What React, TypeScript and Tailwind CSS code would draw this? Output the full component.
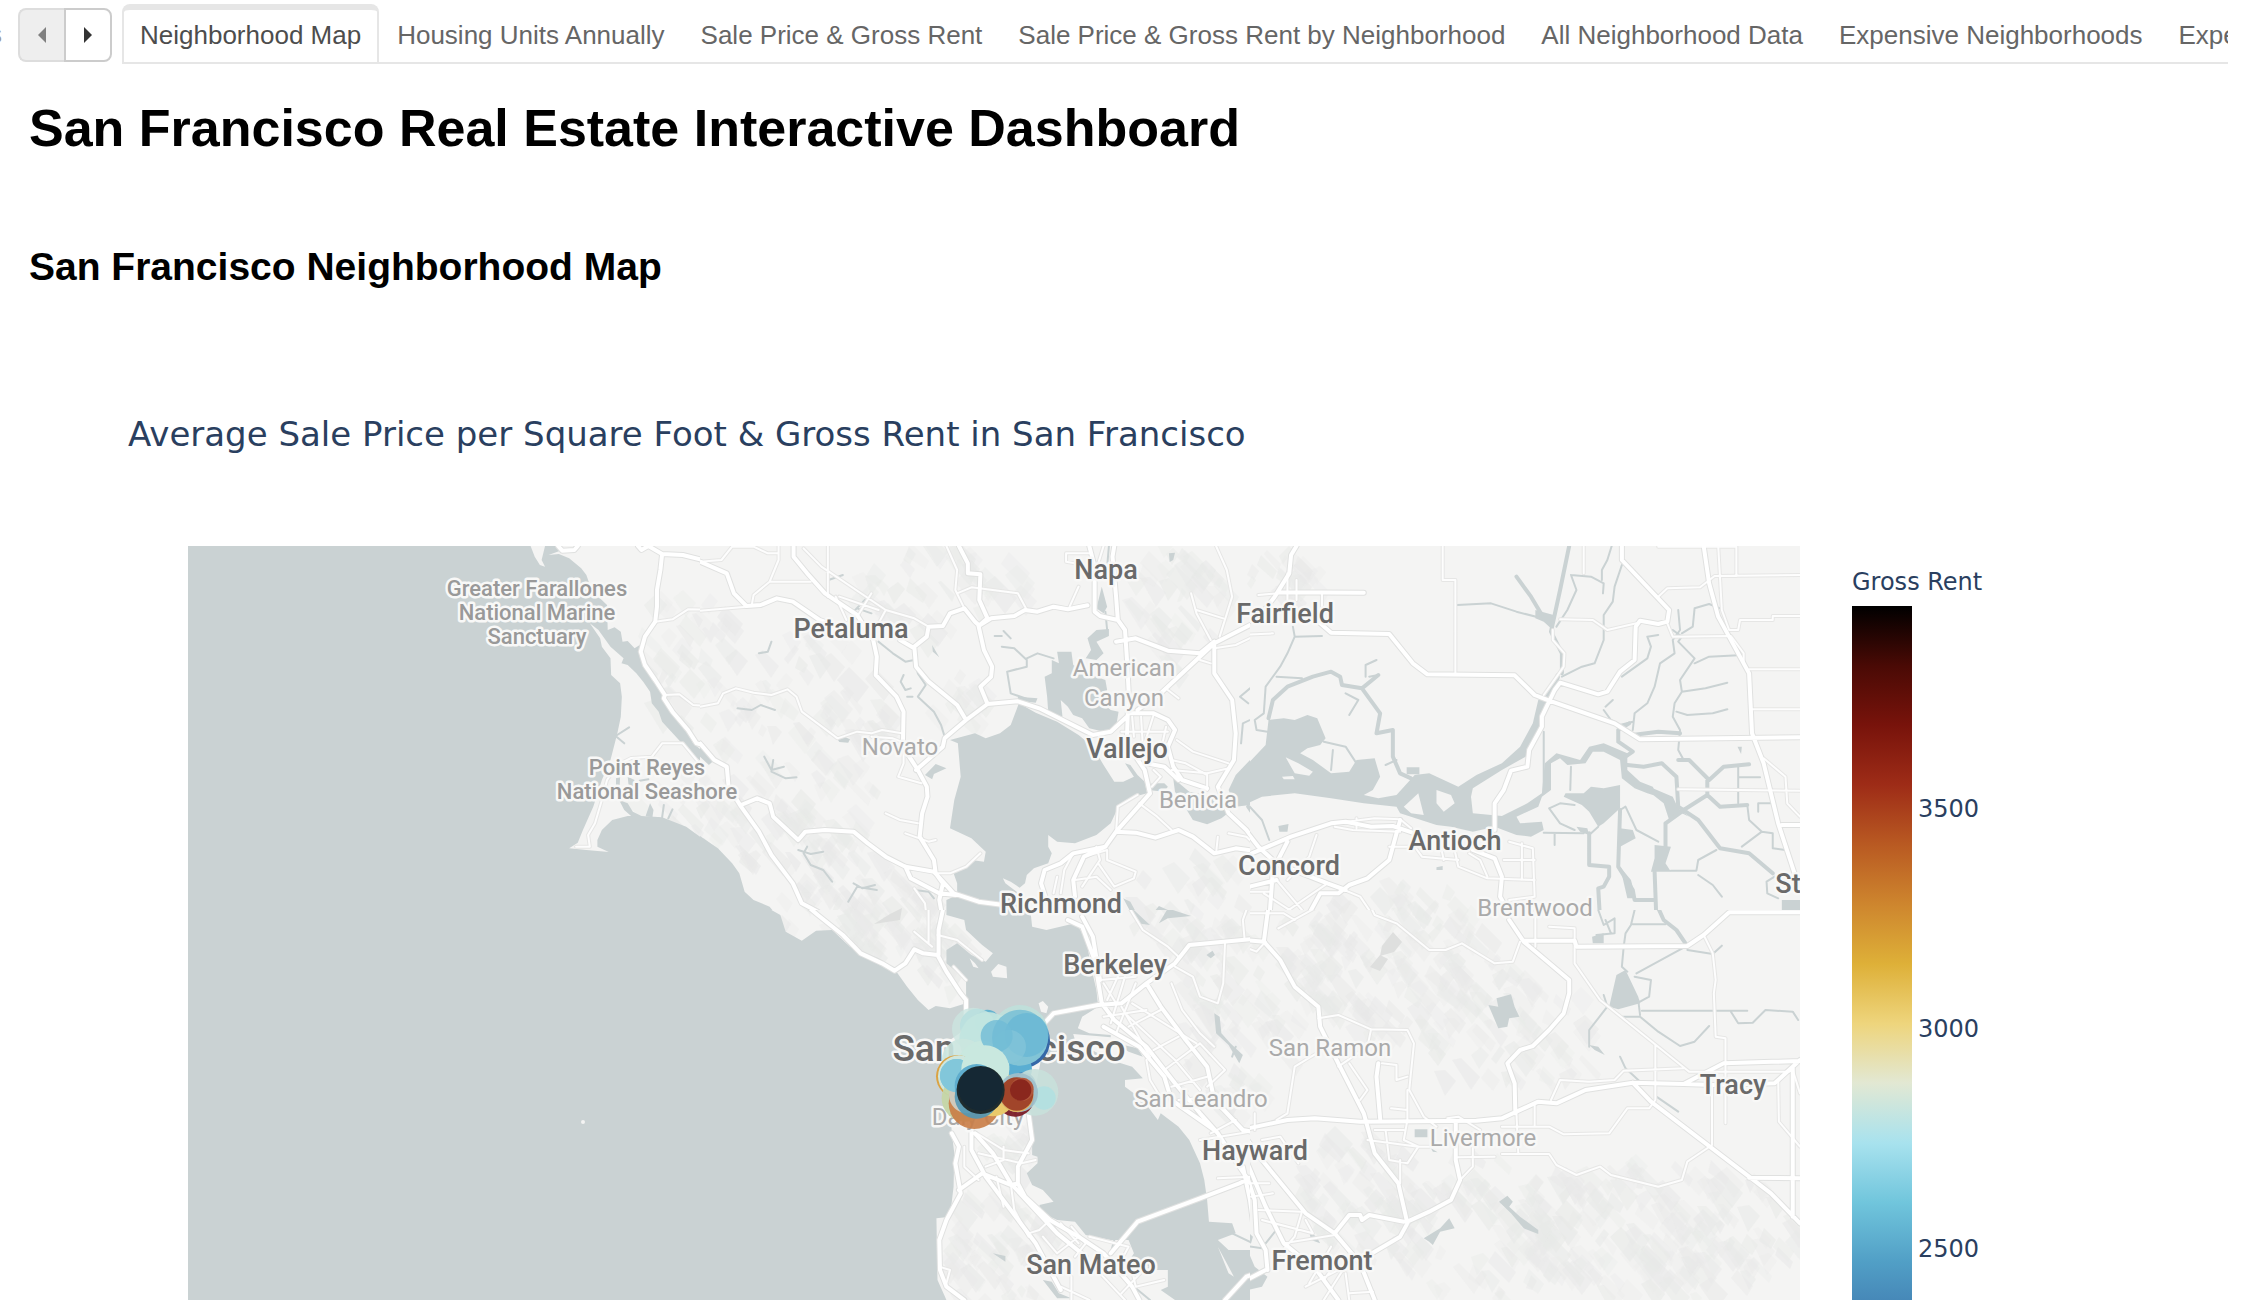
import React from "react";

const TABS = [
  "Neighborhood Map",
  "Housing Units Annually",
  "Sale Price & Gross Rent",
  "Sale Price & Gross Rent by Neighborhood",
  "All Neighborhood Data",
  "Expensive Neighborhoods",
  "Expensive Neighborhood Costs",
];

const WATER = "#cad2d3";
const LAND = "#f4f4f3";

type Tile = {
  x: number;
  y: number;
  w: number;
  h: number;
  view: string;
  water: string;
  islands?: string;
  streams: string;
  channels?: string;
  major: string;
  minor: string;
};

// Each tile has its own local coordinates and is scaled into the map.
const TILES: Tile[] = [
  {
    x: 188,
    y: 546,
    w: 512,
    h: 364,
    view: "23 48 1487 1092",
    water:
      "M23,48 H1018 L1030,80 L1045,105 L1060,110 L1050,90 L1060,48 H1098 L1104,62 L1070,75 L1100,72 L1130,85 L1165,115 L1180,135 L1190,165 L1215,200 L1240,225 L1242,300 L1262,292 L1280,305 L1285,335 L1300,333 L1320,355 L1335,345 L1345,400 L1370,450 L1400,490 L1415,525 L1450,560 L1470,600 L1490,640 L1548,690 L1520,700 L1480,665 L1440,620 L1400,575 L1390,545 L1370,520 L1365,485 L1345,455 L1325,430 L1300,405 L1282,400 L1288,385 L1250,350 L1215,300 L1190,280 L1220,325 L1225,350 L1250,385 L1252,435 L1278,460 L1283,500 L1280,560 L1270,610 L1250,690 L1225,750 L1200,830 L1170,900 L1155,938 L1130,955 L1180,960 L1245,966 L1212,950 L1212,930 L1225,900 L1255,870 L1300,858 L1340,858 L1400,862 L1470,890 L1510,920 L1568,975 V1170 H23Z M1275,810 L1300,820 L1315,845 L1340,858 L1310,858 L1290,840Z M1365,820 L1375,840 L1372,860 L1352,858Z M1300,740 L1320,750 L1315,785 L1303,770Z M1266,745 L1278,740 L1276,780 L1266,780Z",
    streams: "M1304,592 L1265,618 L1290,640 M1405,825 L1400,862 M1430,838 L1418,865 M1360,748 L1335,752",
    major:
      "M1330,48 L1340,60 L1360,48 L1400,72 L1460,75 L1510,88 L1568,120 M1400,72 L1395,120 L1385,180 L1385,230 L1380,275 L1350,320 L1338,365 L1350,405 L1380,450 L1408,495 L1405,505 L1430,545 L1475,600 L1500,640 L1520,645 L1550,690 M1098,48 L1110,62 L1145,60 L1155,48",
    minor:
      "M1380,275 L1430,268 L1475,238 L1568,240 M1408,495 L1450,493 L1490,525 L1530,528 L1568,515 M1560,760 L1500,690 L1460,640 L1400,640 L1370,680 L1310,684 L1270,705 L1240,750 L1225,810 L1205,880 L1185,915 L1190,950 L1150,950",
  },
  {
    x: 700,
    y: 546,
    w: 550,
    h: 364,
    view: "0 48 1540 1092",
    water:
      "M0,918 L50,955 L90,1000 L110,1030 L125,1085 L150,1110 L195,1130 L225,1170 H0Z M0,650 L40,690 L25,705 L0,680Z M893,520 L940,548 L1000,575 L1060,615 L1100,650 L1130,705 L1160,755 L1185,755 L1215,740 L1190,700 L1205,705 L1225,735 L1245,755 L1252,790 L1215,800 L1185,820 L1165,845 L1150,880 L1110,915 L1050,940 L1000,935 L975,915 L975,950 L985,970 L975,1000 L935,1015 L915,1035 L910,1060 L895,1073 L870,1055 L848,1045 L855,1060 L880,1080 L905,1100 L925,1140 L940,1170 H700 L690,1140 L690,1110 L720,1095 L720,1060 L710,1030 L745,1015 L760,990 L795,995 L800,965 L760,925 L700,895 L712,810 L730,740 L722,640 L700,630 L770,610 L800,625 L840,610 L870,585Z M985,390 L1005,400 L1000,365 L1040,365 L1045,405 L1110,440 L1135,450 L1140,480 L1120,510 L1150,540 L1172,545 L1165,590 L1130,605 L1090,595 L1070,565 L1045,555 L1030,530 L1010,510 L1015,560 L975,545 L972,500 L965,440 L985,430Z M1125,170 L1140,230 L1130,250 L1110,235Z M1085,325 L1110,300 L1145,297 L1145,318 L1110,335 L1130,370 L1110,390 L1080,385 L1095,360Z M1265,760 L1300,760 L1310,770 L1300,785 L1255,780Z M1325,745 L1370,785 L1440,800 L1478,850 L1460,865 L1420,883 L1380,870 L1360,835 L1330,785Z M1568,660 L1540,690 L1500,735 L1480,780 L1500,830 L1540,825 L1568,820Z M385,628 L400,618 L420,628 L415,638 L390,636Z M630,735 L660,702 L690,715 L655,732 L650,748Z M650,345 L670,382 L652,365Z M890,500 L945,505 L940,518 L890,512Z M1313,70 L1330,68 L1325,90 L1315,96Z M1185,1105 L1205,1115 L1230,1165 L1215,1165Z M1260,1160 L1285,1128 L1310,1140 L1350,1145 L1290,1165Z",
    streams:
      "M500,335 L540,370 L575,395 L600,390 L610,430 L632,465 L610,500 L655,545 L675,585 L685,620 M275,960 L310,972 L345,965 M300,950 L290,970 L310,1005 L345,1020 L370,1055 M415,1115 L440,1070 L495,1080 M430,1060 L455,1075 L490,1065 M180,680 L200,720 L235,710 M205,690 L200,725 L240,745 L270,742 M105,535 L145,540 L170,525 L210,540 M165,370 L190,365 L200,335 M360,150 L400,135 M430,245 L475,195 M440,235 L480,250 M570,435 L562,455 L575,480 L590,475 M580,500 L595,500 M845,350 L880,355 L915,390 L915,410 L860,425 L870,490 L930,512 M915,385 L945,370 L990,385 M1135,245 L1140,300 M825,318 L845,318 M850,303 L870,325 M1145,48 L1140,110 M1540,475 L1512,500 L1535,520 M1515,640 L1520,580 L1560,560 M600,1080 L640,1085 L655,1105",
    channels: "M1535,830 L1568,880",
    major:
      "M262,48 L262,80 L300,130 L350,190 L440,255 L485,330 L495,380 L492,435 L550,500 L570,545 L568,650 L610,720 L635,770 L637,800 L622,850 L615,920 L655,990 L660,1030 L680,1060 L670,1110 L680,1170 M605,720 L680,650 L685,625 L745,570 L805,522 L890,514 L950,535 L1100,615 L1150,605 L1195,560 M725,48 L750,100 L750,130 L785,133 L782,210 L805,265 L780,288 L795,360 L818,410 L815,440 L785,470 L805,522 M780,288 L815,265 L880,258 L910,240 L945,245 L990,230 L1030,238 L1085,226 M780,285 L770,275 L740,235 L700,250 L680,288 L640,290 L635,320 L600,350 L605,410 L640,455 L720,525 L745,570 M560,330 L600,355 M0,95 L75,130 L95,190 L130,228 L170,225 L215,205 L260,215 L335,270 L440,310 M1090,48 L1105,110 L1105,245 L1120,258 L1170,270 L1190,300 L1195,380 L1200,480 L1195,640 L1245,720 L1260,790 L1165,905 L1135,950 L1045,970 L1010,1000 L965,1020 L955,1060 L970,1110 M1160,48 L1155,80 L1165,200 L1170,270 M1165,335 L1220,325 L1310,362 L1400,370 L1440,335 M1568,270 L1440,340 L1350,430 L1290,490 L1225,540 M1440,340 L1440,430 L1490,510 L1500,610 L1495,690 L1450,770 L1480,850 L1530,900 L1568,955 M1200,550 L1270,550 L1310,570 L1330,600 L1310,650 L1325,710 L1350,750 L1420,775 M1250,700 L1300,710 L1340,750 M1165,905 L1220,908 L1275,923 L1340,900 L1380,920 L1440,970 L1500,955 L1568,965 M1135,950 L1075,980 L1045,1050 L1050,1100 M0,640 L40,690 L75,710 L80,770 L115,830 L165,905 L200,975 L260,1060 L285,1120 L330,1145 L355,1170 M115,825 L160,805 L195,820 L205,860 L275,930 L295,905 L350,900 L430,905 L470,940 L520,980 L575,1010 L655,1025 L710,1090 L780,1115 L850,1125 M575,1010 L590,1045 L670,1090 L715,1095",
    minor:
      "M0,530 L50,520 L65,490 L100,475 L150,488 L200,495 L245,478 L270,500 L285,545 L360,605 L385,625 L440,605 L480,610 L510,600 L565,610 M220,48 L220,90 L195,155 L150,195 L145,225 M195,155 L310,155 M0,95 L60,90 L90,50 L150,50 L190,70 L220,70 M0,242 L130,230 M290,55 L340,110 L520,240 L600,265 L640,290 M358,48 L358,200 M690,48 L720,120 L715,180 L740,235 M720,190 L760,172 L890,190 L915,240 M1035,230 L1060,170 M1090,70 L1025,70 L1025,95 L1050,100 M1130,48 L1115,100 M1445,48 L1475,120 L1490,200 L1455,320 M1375,190 L1390,250 L1430,330 M1390,240 L1465,265 M520,850 L560,870 L610,880 M575,910 L640,935 L660,930 M1165,905 L1170,830 L1225,795 M1230,820 L1280,860 L1320,900 M1335,630 L1380,665 L1480,700 M1320,720 L1420,730 L1480,715 M1420,730 L1420,780 M1320,690 L1360,700 L1420,735 M1210,560 L1215,620 M1235,560 L1240,650 M1270,555 L1245,640 M1180,605 L1310,605 M1305,590 L1295,640 M570,620 L570,700 L555,740 L620,760 M480,620 L540,625 L600,650 M1045,970 L1020,1020 L1010,1090 M1075,980 L1140,960 L1140,990 L1220,1025 L1215,1045 L1160,1070 L1115,1000 M1050,1050 L1110,1040 L1150,1080 M1110,950 L1120,990 L1070,1070 M1000,1040 L990,1090 M655,1030 L700,1030 L745,1010 L785,970 M1450,920 L1445,970 M1480,910 L1530,920 L1568,960 M600,1075 L630,1120 L635,1170 M380,200 L410,270 M390,200 L500,240 M480,190 L440,260 M520,240 L500,280 M1440,355 L1500,345 L1568,310 M1400,390 L1430,400 M1310,480 L1340,505 M1265,770 L1290,740 L1270,720",
  },
  {
    x: 1250,
    y: 546,
    w: 550,
    h: 364,
    view: "27 48 1513 1092",
    water:
      "M0,725 L70,645 L78,570 L120,565 L150,570 L185,555 L212,565 L235,625 L220,645 L185,655 L165,670 L200,690 L250,730 L300,725 L320,690 L370,685 L385,740 L365,780 L340,795 L380,805 L430,795 L455,765 L480,735 L520,730 L600,770 L650,735 L720,700 L770,650 L805,580 L820,510 L850,470 L870,430 L880,440 L870,475 L850,510 L835,560 L825,610 L785,680 L720,720 L640,775 L635,800 L640,850 L720,858 L790,820 L830,790 L838,700 L870,670 L935,690 L960,650 L1000,640 L1065,670 L1065,720 L1100,755 L1135,770 L1150,800 L1120,790 L1085,775 L1050,745 L1045,690 L1000,665 L970,665 L950,700 L900,705 L880,685 L855,700 L855,780 L830,800 L820,830 L760,860 L770,880 L830,875 L835,900 L800,920 L760,915 L700,890 L640,905 L580,890 L540,885 L440,850 L430,830 L340,820 L250,805 L150,790 L60,800 L0,830Z M945,790 L965,770 L1000,775 L1045,765 L1045,835 L1000,880 L985,890 L960,845 L940,825 L890,800 L895,790Z M812,240 L862,255 L860,300 L835,275 L812,265Z M1135,775 L1190,800 L1205,835 L1235,860 L1215,850 L1180,870 L1165,820 L1130,790Z M1045,895 L1080,900 L1088,925 L1045,950Z M1140,945 L1185,950 L1170,1000 L1185,1025 L1130,1025 L1140,985Z M1490,1110 L1540,1110 L1540,1140 L1490,1140Z M458,712 L493,712 L493,733 L458,733Z M105,888 L133,882 L130,905 L108,905Z M1045,1010 L1075,1050 L1088,1105 L1065,1105Z M1368,650 L1380,650 L1378,672Z M540,1012 L557,1008 L557,1020 L540,1020Z M925,890 L955,895 L960,915 L935,905Z",
    islands:
      "M125,682 L160,700 L200,725 L190,737 L150,730Z M115,740 L145,738 L150,748 L120,748Z M450,830 L490,790 L505,855 L470,850Z M540,780 L580,795 L590,820 L560,845 L540,820Z M635,800 L690,835 L660,845Z",
    streams:
      "M597,225 L690,220 L760,245 L830,265 M1022,48 L1010,90 L995,120 L995,150 M910,135 L965,140 L1000,160 L998,190 M910,135 L925,180 L900,240 L870,290 M1050,105 L1030,170 L1025,215 L1000,255 L1000,330 L975,400 L940,410 L885,440 M1205,240 L1210,300 L1190,330 L1195,370 L1155,400 L1140,470 L1120,520 L1085,550 L1080,600 M1190,300 L1215,320 L1205,335 L1250,385 L1210,450 L1215,485 L1195,520 L1190,560 L1210,600 L1205,660 L1220,690 M1250,400 L1290,380 L1370,376 M1215,485 L1280,475 L1340,458 M1200,545 L1230,555 L1300,550 L1340,538 M1215,310 L1245,290 L1250,235 L1290,222 L1320,235 M1050,440 L1120,385 L1130,350 L1120,320 L1150,315 M1000,540 L1020,570 L1045,585 L1080,575 M1005,530 L1025,510 M1370,710 L1370,820 M1370,742 L1430,742 M1395,825 L1400,870 L1435,905 L1465,910 L1465,955 L1500,960 M1435,905 L1380,950 M850,835 L880,820 L920,825 M985,890 L960,915 M920,900 L880,880 L850,835 M835,908 L945,910 M865,910 L865,945 M1045,840 L1060,830 L1090,900 L1150,935 M1185,1022 L1255,1022 L1260,990 L1310,960 M1260,1035 L1300,1065 L1325,1100 M1470,1040 L1448,1055 L1450,1090 L1480,1105 M910,710 L908,780 M835,605 L835,780 M145,290 L150,320 L130,370 L110,410 L70,470 L65,550 L40,570 L45,600 L75,605 M345,440 L345,405 L375,390 M380,435 L355,440 M290,490 L325,510 L300,555 M100,440 L170,445 M150,320 L225,318 M230,635 L290,650 L320,700 M255,660 L250,720 M22,825 L60,870 L80,930 M400,705 L430,690 M1425,845 L1425,820 L1460,820",
    channels:
      "M905,48 L880,180 L862,270 L855,305 L885,370 L885,430 M760,140 L800,200 L830,255 M78,565 L90,510 L130,470 L200,440 L250,425 L275,440 L280,465 L335,475 L380,435 M335,475 L385,550 L375,610 L420,600 L420,680 L440,730 L470,745 M1080,615 L1150,605 L1210,610 M1070,580 L1040,600 L1040,635 L1080,665 L1060,680 M1065,705 L1110,710 L1160,700 L1200,740 L1205,830 M1205,690 L1235,690 L1290,750 L1330,710 L1400,703 M1285,750 L1285,795 L1220,840 M1285,795 L1320,830 L1395,825 M1205,830 L1260,870 L1320,955 L1400,970 L1465,1030 M960,910 L960,1005 L1015,1010 L1015,1040 L1000,1070 L985,1075 L990,1170 M1045,840 L1040,1010 L1080,1080 L1085,1110 L1140,1110 M1140,1025 L1145,1170 M1170,880 L1170,950 M1215,845 L1170,880",
    major:
      "M155,48 L140,75 L135,130 L95,200 L60,250 L0,290 M105,187 L340,188 M220,280 L250,308 L410,312 L475,400 L515,433 L755,436 L810,495 L850,512 L1030,580 L1100,628 L1540,622 M1050,48 L1050,90 L1180,240 L1175,275 L1150,282 L1100,272 L1088,290 L1085,390 L1045,425 L1010,485 L985,493 L880,458 L865,480 L830,560 L830,590 L795,660 L790,710 L745,722 L725,780 L700,820 L700,900 M1275,48 L1290,160 L1315,260 L1400,430 L1408,610 L1440,700 L1480,880 L1525,1030 M0,985 L140,920 L250,880 L290,875 L360,890 L420,888 L480,910 M440,870 L410,990 L350,1045 L300,1065 L270,1090 L220,1090 L190,1150 M0,880 L50,950 L100,1000 L240,1060 L290,1080 M130,935 L90,1020 L80,1170 M640,960 L700,985 L720,1040 L715,1100 L730,1130 M0,1150 L25,1070 L100,1050 M1490,885 L1540,885",
    minor:
      "M557,48 L557,150 L592,150 L592,430 M945,48 L945,130 M880,268 L970,270 L1010,300 L1090,280 M1150,200 L1175,175 L1265,172 L1305,138 L1540,135 M1150,50 L1365,50 L1365,138 M1315,48 L1325,240 L1345,300 L1370,300 L1375,270 L1465,270 L1465,258 L1540,258 M1175,280 L1190,320 L1350,318 L1385,370 L1385,400 M1400,418 L1540,418 M1408,538 L1540,538 M1440,685 L1500,740 L1505,820 L1540,860 M1205,778 L1540,782 M860,300 L860,330 L892,370 L890,410 L835,495 M260,880 L370,865 L440,868 L470,895 M260,890 L310,900 L440,905 M320,865 L320,895 M410,950 L480,950 L500,980 L600,990 M590,960 L600,1010 L680,1045 L810,1050 M680,1040 L660,990 L630,970 M740,935 L805,955 L810,1100 L740,1110 M725,990 L810,990 M775,940 L775,1050 M210,915 L190,980 L130,1050 M65,1090 L150,1150 M100,1050 L170,1140 M20,1085 L80,1085 M220,1050 L330,1100 L355,1140 M0,315 L90,310 M130,130 L130,210 M155,150 L155,210 M225,190 L225,250 M50,195 L105,190 M550,940 L560,990 M240,1060 L120,1150",
  },
  {
    x: 700,
    y: 910,
    w: 550,
    h: 390,
    view: "0 30 1540 1170",
    water:
      "M0,30 H200 L225,45 L240,95 L285,122 L325,92 L370,90 L420,140 L500,175 L550,215 L580,260 L610,300 L640,330 L660,318 L700,325 L745,310 L745,240 L690,190 L690,150 L720,130 L760,165 L800,185 L820,160 L790,135 L745,90 L740,60 L690,45 V30 H925 L930,80 L970,90 L1050,70 L1080,110 L1095,200 L1110,270 L1115,320 L1070,350 L1058,385 L1090,400 L1150,405 L1150,412 L1045,402 L1050,420 L1080,440 L1150,480 L1210,500 L1240,535 L1190,540 L1190,560 L1240,600 L1282,660 L1290,640 L1340,680 L1370,720 L1400,790 L1412,840 L1420,900 L1425,965 L1490,970 L1500,1000 L1450,1020 L1480,1050 L1568,1050 V1200 H1330 L1290,1170 L1310,1160 L1310,1110 L1270,1110 L1200,1085 L1215,1060 L1200,1020 L1150,1020 L1080,1005 L1050,965 L1000,960 L960,940 L950,915 L990,905 L960,870 L930,855 L915,820 L945,790 L945,770 L930,765 L930,700 L915,640 L940,560 L960,450 L930,380 L880,345 L760,345 L740,390 L700,420 V600 L705,700 L712,760 L710,860 L700,950 L662,955 L665,1140 L690,1200 H0Z M820,1060 L855,1068 L855,1085Z M1418,165 L1435,152 L1442,165 L1430,175Z M1440,340 L1455,350 L1460,400 L1485,430 L1520,465 L1510,490 L1480,435 L1445,400Z M960,1140 L985,1145 L1005,1180 L1040,1195 L1000,1195Z M1185,0 L1235,50 L1260,75 L1225,70Z M1285,70 L1310,25 L1375,48 L1310,55Z M1165,430 L1225,445 L1240,470 L1200,455Z",
    islands: "M815,215 L835,192 L858,200 L860,235 L820,230Z M948,310 L960,303 L975,320 L970,340 L955,335Z M755,175 L770,190 L780,205 L765,200Z M1450,1040 L1480,1120 L1495,1130 L1470,1080Z",
    streams: "M1500,440 L1490,470 M1160,1020 L1150,1060 M1215,1160 L1260,1200 M1490,1000 L1568,1040",
    major:
      "M280,0 L330,45 L400,105 L450,160 L510,190 L545,212 L575,190 L600,148 L625,160 L665,165 L690,215 L730,280 L745,300 L745,360 M680,30 L668,90 L668,165 M960,375 L990,340 L1115,315 L1180,310 L1250,250 L1330,190 L1370,135 L1568,115 M1030,60 L1070,80 L1105,180 L1125,310 L1160,360 L1250,440 L1330,550 L1400,640 L1450,700 L1510,800 L1568,890 M1070,50 L1100,110 L1120,240 M1250,250 L1290,320 L1360,420 L1420,500 L1440,600 L1520,690 L1568,700 M1130,380 L1230,440 L1300,530 L1320,600 L1440,690 M760,690 L760,750 L800,830 L870,930 L940,1030 L1010,1170 M920,640 L930,720 L890,800 L890,850 L910,890 L980,960 L1060,1010 L1130,1060 L1210,1160 L1230,1200 M705,700 L725,740 L715,790 L730,880 L690,960 L670,1020 L672,1110 L690,1160 L740,1200 M1150,1060 L1225,965 L1400,895 L1510,850 L1568,820 M770,700 L820,760 L870,850 L1000,1000 L1080,1070 M725,870 L790,820 L870,855 L890,850 M1470,1200 L1530,1130 L1568,1115 M1520,800 L1540,900 L1555,1020",
    minor:
      "M640,30 L640,130 M665,105 L720,120 L790,180 M600,95 L650,140 M710,200 L745,240 M1200,20 L1240,90 L1310,140 L1340,170 M1470,130 L1465,250 L1450,310 L1400,290 L1380,230 L1330,200 M1525,120 L1520,60 L1530,30 M1120,240 L1220,230 M1140,300 L1170,230 M1165,400 L1220,250 M1150,370 L1190,230 M1180,320 L1260,470 M1130,350 L1250,330 M1130,250 L1165,310 M1200,380 L1290,330 M1270,450 L1340,410 M1210,310 L1390,430 M1190,340 L1330,480 L1400,570 M1300,510 L1400,430 M1400,430 L1470,510 L1420,560 M1340,600 L1440,590 M1320,560 L1420,530 M1400,720 L1568,690 M1250,480 L1260,540 L1300,610 M1320,250 L1350,330 L1400,400 L1440,440 M780,760 L900,790 L940,780 M850,750 L920,760 M800,800 L850,780 L850,740 M775,700 L850,750 M740,740 L740,800 L780,840 M830,830 L850,920 M920,1000 L950,990 L980,960 M870,850 L880,930 L920,1010 M1060,1010 L1000,1060 L960,1010 M1040,980 L1080,1030 L1050,1070 M1010,970 L1060,1030 M670,1100 L700,1110 L690,1150 M1450,835 L1540,830 M1430,700 L1500,660 M1180,1180 L1250,1100 M1090,1010 L1200,1040 L1180,1080 M1010,1160 L1090,1200 M1040,1130 L1040,1200 M1120,1120 L1190,1200 M1210,1110 L1220,1160 L1300,1140",
  },
  {
    x: 1250,
    y: 910,
    w: 550,
    h: 390,
    view: "27 30 1513 1170",
    water:
      "M683,315 L710,320 L705,295 L745,283 L755,320 L768,350 L740,355 L735,380 L710,385Z M1015,320 L1035,225 L1060,210 L1095,290 L1100,310 L1040,328Z M968,110 L1000,100 L1000,130 L970,130Z M712,905 L735,887 L750,905 L740,920 L770,950 L820,990 L820,1002 L780,985 L745,940Z M505,1015 L550,985 L575,955 L590,985 L550,995 L530,1035 L520,1025Z M480,688 L515,688 L515,712 L480,712Z M0,960 L20,960 L20,995 L35,1010 L30,1030 L0,1035Z M0,1045 L20,1050 L40,1100 L75,1130 L60,1160 L20,1170 L0,1200Z M190,995 L210,1010 L220,1030 L195,1020Z M1490,0 L1540,0 V30 H1490Z M525,745 L543,757 L530,755Z M960,435 L985,440 L1003,465 L975,450Z",
    streams:
      "M985,30 L1000,75 L1030,55 L1030,100 L980,105 M1005,60 L1020,100 M1085,30 L1075,75 L1060,100 L1055,140 L1050,200 L1065,215 M1080,73 L1170,73 M1225,140 L1090,220 M1230,150 L1300,162 L1325,137 M1105,332 L1395,332 M1350,335 L1370,370 L1410,368 L1445,330 L1520,335 L1535,360 M1050,350 L1100,350 L1150,395 L1210,438 L1250,425 L1290,378 M1085,230 L1130,240 L1125,290 L1100,305 M1010,320 L960,390 L960,440 M1045,470 L1060,505 L1110,555 M1145,590 L1205,635 M1095,300 L1100,345 M1000,285 L1010,320 M70,1030 L110,975 L145,985 M0,1035 L60,1045",
    channels: "M1140,0 L1165,60 L1200,90 L1225,130",
    major:
      "M80,0 L65,125 L110,180 L150,260 L215,320 L220,380 L270,490 L340,640 L370,760 L435,850 L460,970 M0,690 L130,660 L205,655 L330,665 L650,662 L720,655 L820,605 L870,610 L950,570 L1080,548 L1220,552 L1330,490 L1540,483 M1080,548 L1130,605 L1400,830 L1460,880 L1540,970 M740,60 L780,125 L840,180 L905,240 L905,280 L890,340 L850,390 L805,438 L770,450 L735,490 L755,550 L757,640 M460,965 L520,935 L580,900 L605,840 L593,780 L593,670 M460,970 L440,1010 L370,1055 L330,1080 M780,122 L920,122 L925,140 L1230,138 L1275,105 L1345,37 L1540,37 M1220,552 L1300,555 L1470,550 L1540,480 M1520,500 L1520,950 M1400,833 L1540,835 M380,490 L375,530 L385,655 M0,690 L60,780 L180,940 L260,1000 L330,1090 L370,1200 M260,1000 L300,945 L330,945 L335,960 L355,945 L450,965 M10,800 L40,900 L45,1000 L70,1050 L75,1110 M20,790 L70,920 L120,1030 L210,1110 L270,1200 M0,1150 L70,1110 M10,120 L65,125",
    minor:
      "M350,0 L370,45 L430,70 L520,150 L565,150 L610,130 L700,190 L750,185 L770,125 M920,122 L920,190 L990,300 L1235,515 L1510,515 M850,80 L920,85 L920,120 M812,30 L812,140 M1275,105 L1300,160 L1308,240 L1303,280 L1308,410 L1335,415 L1335,670 M1142,435 L1142,600 L1125,625 L1065,625 L1015,700 L890,703 L850,680 L720,680 M855,600 L880,540 L960,545 L1030,540 L1055,512 L1220,505 M1298,560 L1298,735 L1230,785 L1215,840 L1150,860 L1020,825 L990,800 L925,825 L870,795 L850,762 L720,762 M1480,540 L1482,665 L1540,740 M1520,510 L1540,580 M215,355 L270,345 L360,388 L460,390 L478,430 L465,570 L505,650 L540,680 M360,388 L350,440 L270,500 M300,490 L350,570 L330,600 M390,490 L430,495 L430,540 L460,530 M210,460 L150,500 L130,640 L100,660 M460,570 L460,660 L450,720 L490,740 L520,740 M370,690 L450,690 M415,625 L460,630 M350,720 L490,740 M400,690 L410,780 L460,790 L490,740 M440,780 L440,850 M595,772 L700,770 M640,700 L640,800 L605,840 M810,610 L810,675 M760,640 L765,760 M570,655 L600,650 L660,690 M20,850 L80,850 M30,890 L90,880 M50,930 L170,935 L150,1010 L110,1060 M60,960 L200,1000 L180,960 M120,1030 L260,1005 M190,1150 L250,1040 M230,1200 L300,1080 M180,1160 L270,1110 M290,1120 L300,1200 M270,1080 L230,1140 M300,1180 L365,1175 M0,40 L120,40 L150,60 M105,85 L205,25 L210,0 M10,140 L45,155 L70,125 M40,690 L40,640 M60,720 L110,710 L160,790",
  },
];

// Hill areas: centre x, centre y, radius x, radius y, number of shaded facets
const HILLS: number[][] = [
  [800, 730, 90, 100, 80],
  [770, 870, 110, 70, 90],
  [880, 910, 50, 50, 40],
  [930, 590, 90, 45, 45],
  [1170, 600, 50, 60, 40],
  [1280, 570, 40, 30, 20],
  [680, 660, 60, 70, 40],
  [680, 800, 60, 30, 20],
  [1180, 900, 60, 50, 35],
  [1260, 970, 90, 60, 60],
  [1390, 960, 100, 80, 120],
  [1500, 1030, 90, 60, 60],
  [1220, 1060, 60, 60, 30],
  [1350, 1190, 60, 60, 60],
  [1480, 1230, 110, 70, 80],
  [1640, 1230, 150, 70, 150],
  [990, 1250, 60, 60, 60],
  [1000, 1140, 30, 20, 14],
  [930, 960, 30, 40, 20],
  [950, 700, 30, 40, 12],
];

function buildFacets() {
  let seed = 17;
  const rnd = () => {
    seed = (seed * 16807) % 2147483647;
    return seed / 2147483647;
  };
  const out: { d: string; o: number }[] = [];
  for (const [cx, cy, rx, ry, n] of HILLS) {
    for (let i = 0; i < n; i++) {
      const a = rnd() * Math.PI * 2;
      const r = Math.sqrt(rnd());
      const x = Math.round(cx + Math.cos(a) * r * rx);
      const y = Math.round(cy + Math.sin(a) * r * ry);
      const l = Math.round(4 + rnd() * 18);
      const w = Math.round(3 + rnd() * 9);
      const k = Math.round(rnd() * 14);
      out.push({
        d: `M${x},${y} l${w},${-k} l${l},${l} l${-w},${w + 4} Z`,
        o: 0.2 + rnd() * 0.4,
      });
    }
  }
  return out;
}

const FACETS = buildFacets();

const CITIES: [string, number, number][] = [
  ["Napa", 1106, 579],
  ["Petaluma", 851, 638],
  ["Fairfield", 1285, 623],
  ["Vallejo", 1127, 758],
  ["Antioch", 1455, 850],
  ["Concord", 1289, 875],
  ["Richmond", 1061, 913],
  ["Berkeley", 1115, 974],
  ["Tracy", 1733, 1094],
  ["Hayward", 1255, 1160],
  ["San Mateo", 1091, 1274],
  ["Fremont", 1322, 1270],
];

const TOWNS: [string, number, number][] = [
  ["American", 1124, 676],
  ["Canyon", 1124, 706],
  ["Novato", 900, 755],
  ["Benicia", 1198, 808],
  ["Brentwood", 1535, 916],
  ["San Ramon", 1330, 1056],
  ["San Leandro", 1201, 1107],
  ["Livermore", 1483, 1146],
  ["Daly City", 978, 1125],
];

const PARKS: [string, number, number][] = [
  ["Greater Farallones", 537, 596],
  ["National Marine", 537, 620],
  ["Sanctuary", 537, 644],
  ["Point Reyes", 647, 775],
  ["National Seashore", 647, 799],
];

// cx, cy, r, colour, opacity
const BUBBLES: [number, number, number, string, number][] = [
  [190, 147, 64, "#cbe5e0", 0.8],
  [232, 127, 38, "#5cb0cf", 0.9],
  [202, 138, 52, "#b9dfde", 0.95],
  [330, 160, 85, "#bfe0da", 0.9],
  [338, 182, 82, "#3568a8", 1],
  [232, 180, 84, "#c2e5df", 0.95],
  [160, 240, 64, "#cbe5df", 0.9],
  [322, 268, 44, "#5aaed2", 1],
  [340, 315, 38, "#3b7ab5", 1],
  [220, 260, 78, "#c9e8df", 1],
  [330, 173, 84, "#82c4d6", 1],
  [350, 165, 66, "#6cb9d5", 0.9],
  [298, 200, 50, "#84c6d8", 0.7],
  [260, 168, 48, "#70bcd6", 0.8],
  [142, 289, 64, "#dba343", 1],
  [147, 289, 63, "#cfe6dd", 1],
  [140, 287, 50, "#82c7da", 1],
  [165, 355, 70, "#c5d6a6", 0.95],
  [193, 370, 77, "#c97c45", 0.9],
  [172, 345, 55, "#cfcabb", 1],
  [140, 287, 50, "#82c7da", 1],
  [375, 337, 70, "#c8e0da", 0.9],
  [402, 354, 35, "#b3dfe0", 0.95],
  [315, 352, 58, "#7b1d28", 0.95],
  [248, 337, 72, "#e9c96b", 1],
  [226, 268, 72, "#c9e8df", 1],
  [200, 318, 66, "#5fadcd", 1],
  [200, 350, 66, "#5298b5", 0.9],
  [325, 338, 59, "#9fc0cb", 0.95],
  [320, 346, 50, "#e3b25a", 1],
  [320, 342, 50, "#a1452a", 1],
  [336, 328, 35, "#b0573c", 1],
  [332, 330, 32, "#8a271d", 1],
  [212, 330, 72, "#1f2c2e", 1],
  [212, 326, 66, "#152834", 1],
];

const TICKS = [
  { label: "3500", pad: "pt-[188px]" },
  { label: "3000", pad: "pt-[192px]" },
  { label: "2500", pad: "pt-[192px]" },
];

function MapLabels({
  items,
  size,
  weight,
  fill,
}: {
  items: [string, number, number][];
  size: number;
  weight: number;
  fill: string;
}) {
  return (
    <g
      fontFamily='Roboto, "Liberation Sans", sans-serif'
      fontSize={size}
      fontWeight={weight}
      fill={fill}
      stroke="#f8f8f7"
      strokeWidth={5}
      strokeLinejoin="round"
      paintOrder="stroke"
      textAnchor="middle"
    >
      {items.map(([t, x, y]) => (
        <text key={t} x={x} y={y}>
          {t}
        </text>
      ))}
    </g>
  );
}

function Line({ d, stroke, width }: { d: string; stroke: string; width: number }) {
  return (
    <path
      d={d}
      fill="none"
      stroke={stroke}
      strokeWidth={width}
      strokeLinejoin="round"
      strokeLinecap="round"
      vectorEffect="non-scaling-stroke"
    />
  );
}

function BayAreaMap() {
  return (
    <svg
      viewBox="188 546 1612 754"
      className="block h-auto w-full"
      role="img"
      aria-label="Bay Area map of average sale price per square foot and gross rent"
    >
      <rect x={188} y={546} width={1612} height={754} fill={LAND} />
      {FACETS.map((f, i) => (
        <path key={i} d={f.d} fill="#e8e9e8" opacity={f.o} />
      ))}
      <path
        d="M1393,932 l9,10 l-8,10 l-14,4 l2,-10 Z M1380,955 l8,4 l-8,12 l-10,-4 Z M890,914 l12,-6 l-2,12 l-26,4 Z"
        fill="#dedfde"
      />
      <rect x={188} y={909} width={512} height={391} fill={WATER} />
      <circle cx={583} cy={1122} r={2} fill={LAND} />
      {TILES.map((t) => (
        <svg key={t.view + t.x} x={t.x} y={t.y} width={t.w} height={t.h} viewBox={t.view} preserveAspectRatio="none">
          <path d={t.water} fill={WATER} />
          {t.islands && <path d={t.islands} fill={LAND} />}
          <Line d={t.streams} stroke={WATER} width={2} />
          {t.channels && <Line d={t.channels} stroke={WATER} width={4} />}
          <Line d={t.minor} stroke="#e6e6e5" width={4} />
          <Line d={t.major} stroke="#e0e1e0" width={6} />
          <Line d={t.minor} stroke="#fdfdfd" width={2} />
          <Line d={t.major} stroke="#ffffff" width={4} />
        </svg>
      ))}
      <MapLabels items={PARKS} size={22} weight={500} fill="#999999" />
      <MapLabels items={TOWNS} size={24} weight={400} fill="#aaaaaa" />
      <MapLabels items={CITIES} size={27} weight={500} fill="#6a6a6a" />
      <MapLabels items={[["San Francisco", 1009, 1061]]} size={37} weight={500} fill="#6a6a6a" />
      <MapLabels items={[["St", 1788, 893]]} size={27} weight={500} fill="#6a6a6a" />
      <svg x={910} y={980} width={180} height={180} viewBox="0 0 540 540">
        {BUBBLES.map(([cx, cy, r, fill, o], i) => (
          <circle key={i} cx={cx} cy={cy} r={r} fill={fill} opacity={o} />
        ))}
      </svg>
    </svg>
  );
}

function TabBar() {
  return (
    <header className="flex h-16 items-start overflow-hidden pr-[22px] text-[26px] text-[#666666]">
      <span
        className="flex h-16 w-[2px] shrink-0 items-center justify-end overflow-hidden pt-1 text-[#999999]"
        aria-hidden="true"
      >
        s
      </span>
      <div className="mt-2 ml-4 flex h-[54px] w-[94px] shrink-0">
        <button
          type="button"
          aria-label="Scroll tabs left"
          disabled
          className="flex flex-1 items-center justify-center rounded-l-lg border-2 border-r-0 border-[#dddddd] bg-[#eeeeee]"
        >
          <svg viewBox="0 0 8 16" className="h-4 w-2">
            <path d="M8 0V16L0 8Z" fill="#808080" />
          </svg>
        </button>
        <button
          type="button"
          aria-label="Scroll tabs right"
          className="flex flex-1 items-center justify-center rounded-r-lg border-2 border-[#cccccc] bg-white"
        >
          <svg viewBox="0 0 8 16" className="h-4 w-2">
            <path d="M0 0V16L8 8Z" fill="#333333" />
          </svg>
        </button>
      </div>
      <nav className="mt-1 ml-[10px] flex h-[60px] min-w-0 flex-1 overflow-hidden whitespace-nowrap shadow-[inset_0_-2px_0_#e6e6e6]">
        {TABS.map((t, i) => (
          <button
            key={t}
            type="button"
            className={
              i === 0
                ? "h-[58px] shrink-0 rounded-t-lg border-x-2 border-t-[6px] border-[#e6e6e6] bg-white px-4 pb-[2px] text-[#4d4d4d]"
                : "h-[58px] shrink-0 border-t-[6px] border-transparent px-[18px] pb-[2px]"
            }
          >
            {t}
          </button>
        ))}
      </nav>
    </header>
  );
}

export default function App() {
  return (
    <div className="h-screen overflow-hidden bg-white font-['Liberation_Sans',Arial,sans-serif] text-black">
      <TabBar />
      <main>
        <h1 className="px-[29px] pt-8 text-[52px] leading-[64px] font-bold">
          San Francisco Real Estate Interactive Dashboard
        </h1>
        <h2 className="px-[29px] pt-[83px] text-[39px] leading-[48px] font-bold">San Francisco Neighborhood Map</h2>
        <section className="font-['DejaVu_Sans',Verdana,sans-serif] text-[#2a3f5f]">
          <h3 className="pt-[123px] pl-32 text-[34px] leading-10">
            Average Sale Price per Square Foot &amp; Gross Rent in San Francisco
          </h3>
          <div className="flex pt-[92px] pl-[188px]">
            <div className="min-w-0 flex-1">
              <BayAreaMap />
            </div>
            <div className="ml-[52px] w-[398px] shrink-0 pt-[22px] text-2xl leading-7">
              <div>Gross Rent</div>
              <div className="mt-[10px] flex">
                <div className="h-[694px] w-[60px] bg-[linear-gradient(to_bottom,#000000_0px,#4a0a05_60px,#78130b_119px,#9e2c17_179px,#b95a22_239px,#ce862e_299px,#deb038_358px,#eed57d_418px,#e2e8d3_477px,#a8e2ee_537px,#70c5dc_597px,#519fc6_656px,#407bb0_716px)]" />
                <div className="pt-px pl-[6px]">
                  {TICKS.map((t) => (
                    <div key={t.label} className={t.pad}>
                      {t.label}
                    </div>
                  ))}
                </div>
              </div>
            </div>
          </div>
        </section>
      </main>
    </div>
  );
}
